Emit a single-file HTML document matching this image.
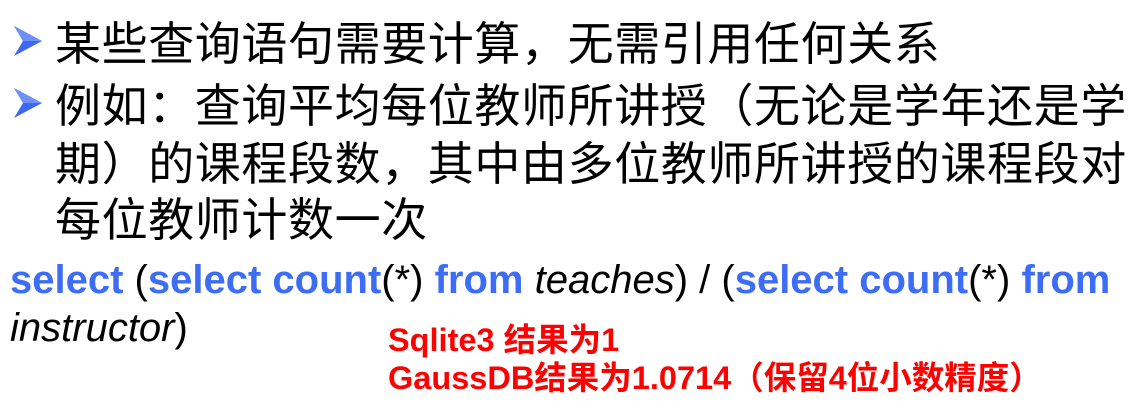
<!DOCTYPE html>
<html><head><meta charset="utf-8"><style>
body{margin:0;width:1147px;height:412px;background:#fff;position:relative;overflow:hidden}
.cn{position:absolute;left:55px;font:46px/58px "Noto Sans CJK SC","WenQuanYi Zen Hei",sans-serif;letter-spacing:0.6px;color:#000;white-space:nowrap}
.arr{position:absolute;left:13px}
.code{position:absolute;left:10px;font:40px/46px "Liberation Sans",sans-serif;color:#000;white-space:nowrap}
.k{color:#3d6df5;font-weight:bold}
.red{position:absolute;left:388px;font:bold 32.5px/40px "Liberation Sans","Noto Sans CJK SC",sans-serif;color:#f00;white-space:nowrap}
</style></head><body>
<svg class="arr" style="top:25px" width="30" height="32" viewBox="0 0 30 32"><path d="M1 1 L29 16 L1 31 L10 16 Z" fill="#3f68f2"/><path d="M1 1 L29 16 L10 16 Z" fill="#6f90f6"/></svg>
<svg class="arr" style="top:87px" width="30" height="32" viewBox="0 0 30 32"><path d="M1 1 L29 16 L1 31 L10 16 Z" fill="#3f68f2"/><path d="M1 1 L29 16 L10 16 Z" fill="#6f90f6"/></svg>
<div class="cn" style="top:12px">某些查询语句需要计算，无需引用任何关系</div>
<div class="cn" style="top:74px">例如：查询平均每位教师所讲授（无论是学年还是学</div>
<div class="cn" style="top:132px">期）的课程段数，其中由多位教师所讲授的课程段对</div>
<div class="cn" style="top:188px">每位教师计数一次</div>
<div class="code" style="top:257px"><span class="k">select</span> (<span class="k">select count</span>(*) <span class="k">from</span> <i>teaches</i>) / (<span class="k">select count</span>(*) <span class="k">from</span></div>
<div class="code" style="top:305px"><i>instructor</i>)</div>
<div class="red" style="top:320px">Sqlite3 结果为1</div>
<div class="red" style="top:358px">GaussDB结果为1.0714（保留4位小数精度）</div>
</body></html>
